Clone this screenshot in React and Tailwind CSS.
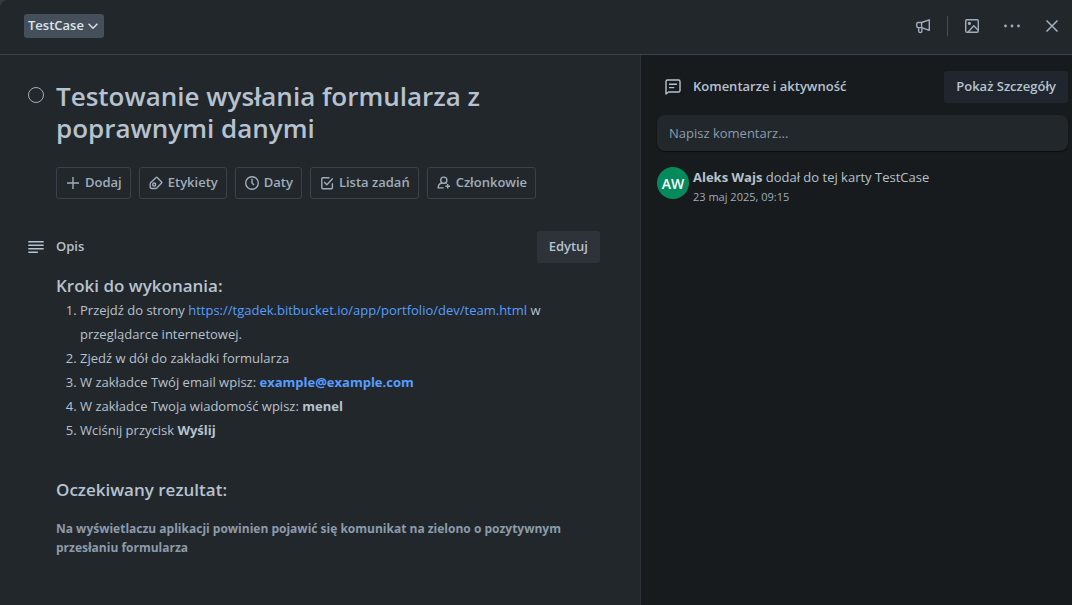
import React from "react";

function Icon({ size = 16, box = 16, className = "", children }) {
  return (
    <svg
      width={size}
      height={size}
      viewBox={`0 0 ${box} ${box}`}
      fill="none"
      stroke="currentColor"
      strokeWidth="1.4"
      strokeLinejoin="round"
      className={`shrink-0 ${className}`}
      aria-hidden="true"
    >
      {children}
    </svg>
  );
}

const MegaphoneIcon = () => (
  <Icon>
    <path d="M14.3 1.8v10.6L6.6 9.6H3.2a1.5 1.5 0 0 1-1.5-1.5V6a1.5 1.5 0 0 1 1.5-1.5h3.4z" />
    <path d="M6.6 4.5v5.1M3.7 9.7v3.2a1.6 1.6 0 0 0 3.2 0V9.7" />
  </Icon>
);

const ImageIcon = () => (
  <Icon>
    <rect x="1.7" y="1.7" width="12.6" height="12.6" rx="1.3" />
    <circle cx="5.4" cy="5.4" r="1.6" fill="currentColor" stroke="none" />
    <path d="m4.2 14 5.6-6.2 4.4 4.4" />
  </Icon>
);

const MoreIcon = () => (
  <Icon size={18} box={18}>
    <g fill="currentColor" stroke="none">
      <circle cx="2.5" cy="9" r="1.4" />
      <circle cx="9" cy="9" r="1.4" />
      <circle cx="15.5" cy="9" r="1.4" />
    </g>
  </Icon>
);

const CloseIcon = () => (
  <Icon>
    <path d="m2.5 2.5 11 11m0-11-11 11" strokeWidth="1.6" />
  </Icon>
);

const PlusIcon = () => (
  <Icon>
    <path d="M8 2v12M2 8h12" />
  </Icon>
);

const LabelIcon = () => (
  <Icon>
    <path d="M9.2 2.4 13.6 6.9a.9.9 0 0 1 0 1.2l-4.8 4.8c-.4.4-.8.6-1.3.6H4.1A1.9 1.9 0 0 1 2.2 11.6V9c0-.5.2-1 .6-1.4l5.4-5.2a.7.7 0 0 1 1 0z" />
    <circle cx="6.2" cy="9.5" r="1.5" />
  </Icon>
);

const ClockIcon = () => (
  <Icon>
    <circle cx="8" cy="8" r="6.3" />
    <path d="M8 3.8V8l2 2" />
  </Icon>
);

const ChecklistIcon = () => (
  <Icon>
    <path d="M10.5 2.8H3.8a1 1 0 0 0-1 1v8.9a1 1 0 0 0 1 1h8.6a1 1 0 0 0 1-1V8.2" />
    <path d="m5.2 7 2.6 2.8 5.9-6.3" />
  </Icon>
);

const MemberIcon = () => (
  <Icon>
    <circle cx="7.8" cy="5.2" r="3.1" />
    <path d="M6 8c-2.6.5-3.8 2.3-3.8 4.9h5.6M9.6 7.6l1.2.9M11.7 9v4.6M9.4 11.3H14" />
  </Icon>
);

const DescriptionIcon = () => (
  <Icon>
    <path d="M.3 2.7h15.4M.3 6.2h15.4M.3 9.7h15.4M.3 13.2h9.6" strokeWidth="1.5" />
  </Icon>
);

const CommentIcon = () => (
  <Icon>
    <path d="M1 15V2.4A1.4 1.4 0 0 1 2.4 1h11.2A1.4 1.4 0 0 1 15 2.4v9.2a1.4 1.4 0 0 1-1.4 1.4H3.5z" />
    <path d="M4 5.3h8M4 8.6h5.3" />
  </Icon>
);

const ACTIONS = [
  { label: "Dodaj", icon: PlusIcon },
  { label: "Etykiety", icon: LabelIcon },
  { label: "Daty", icon: ClockIcon },
  { label: "Lista zadań", icon: ChecklistIcon },
  { label: "Członkowie", icon: MemberIcon },
];

function Header() {
  return (
    <header className="flex items-start justify-between border-b border-[#3a444c] pt-2.5 pr-1 pb-3 pl-6">
      <button
        type="button"
        className="mt-1 flex h-6 items-center gap-0.5 rounded-[3px] bg-[#454f59] px-1 text-[13px] font-semibold text-[#dee4ea]"
      >
        TestCase
        <Icon size={14}>
          <path d="m3 5.5 5 5 5-5" strokeWidth="1.6" />
        </Icon>
      </button>
      <div className="flex items-center text-[#9fadbc]">
        <button type="button" aria-label="Opinia" className="grid size-8 place-items-center">
          <MegaphoneIcon />
        </button>
        <span className="mx-2 h-5 w-px bg-[#454f59]" />
        <button type="button" aria-label="Okładka" className="grid size-8 place-items-center">
          <ImageIcon />
        </button>
        <button type="button" aria-label="Więcej" className="ml-2 grid size-8 place-items-center">
          <MoreIcon />
        </button>
        <button type="button" aria-label="Zamknij" className="ml-2 grid size-8 place-items-center">
          <CloseIcon />
        </button>
      </div>
    </header>
  );
}

function Description() {
  return (
    <section>
      <div className="flex h-8 items-center">
        <DescriptionIcon />
        <h2 className="ml-3 flex-1 text-[13px] font-semibold">Opis</h2>
        <button
          type="button"
          className="h-8 rounded-[3px] bg-[#2d3339] px-3 text-[13px] font-semibold"
        >
          Edytuj
        </button>
      </div>
      <div className="mt-[11px] ml-7">
        <h3 className="text-[17px] leading-6 font-semibold">Kroki do wykonania:</h3>
        <ol className="list-decimal pl-6 text-[13px] leading-6">
          <li>
            Przejdź do strony{" "}
            <a href="https://tgadek.bitbucket.io/app/portfolio/dev/team.html" className="text-[#579dff]">
              https://tgadek.bitbucket.io/app/portfolio/dev/team.html
            </a>{" "}
            w przeglądarce internetowej.
          </li>
          <li>Zjedź w dół do zakładki formularza</li>
          <li>
            W zakładce Twój email wpisz:{" "}
            <a href="mailto:example@example.com" className="font-bold text-[#579dff]">
              example@example.com
            </a>
          </li>
          <li>
            W zakładce Twoja wiadomość wpisz: <strong>menel</strong>
          </li>
          <li>
            Wciśnij przycisk <strong>Wyślij</strong>
          </li>
        </ol>
        <h3 className="mt-9 text-[17px] leading-6 font-semibold">Oczekiwany rezultat:</h3>
        <p className="mt-[17px] text-[12px] leading-[19px] font-bold text-[#8c9bab]">
          Na wyświetlaczu aplikacji powinien pojawić się komunikat na zielono o pozytywnym przesłaniu
          formularza
        </p>
      </div>
    </section>
  );
}

function Activity() {
  return (
    <aside className="w-[432px] shrink-0 border-l border-[#2c3237] bg-[#171b1e] py-4 pr-1 pl-4">
      <div className="flex items-center">
        <span className="ml-2">
          <CommentIcon />
        </span>
        <h2 className="ml-3 flex-1 text-[13px] font-semibold">Komentarze i aktywność</h2>
        <button
          type="button"
          className="h-8 rounded-[3px] bg-[#20262d] px-3 text-[13px] font-semibold"
        >
          Pokaż Szczegóły
        </button>
      </div>
      <input
        type="text"
        aria-label="Napisz komentarz"
        placeholder="Napisz komentarz..."
        className="mt-3 h-9 w-full rounded-lg bg-[#22272b] px-3 text-[13px] font-medium shadow-[0_1px_1px_#0b0e10] placeholder:text-[#8c9bab]"
      />
      <div className="mt-4 flex gap-1">
        <span className="grid size-8 shrink-0 place-items-center rounded-full bg-[#058a5b] text-[14px] font-semibold text-white">
          AW
        </span>
        <div>
          <p className="text-[13px] leading-5">
            <strong>Aleks Wajs</strong> dodał do tej karty TestCase
          </p>
          <p className="text-[11px] leading-5 text-[#9fadbc]">23 maj 2025, 09:15</p>
        </div>
      </div>
    </aside>
  );
}

export default function App() {
  return (
    <div className="min-h-screen bg-[#3a3a3c] font-['Open_Sans','Noto_Sans',sans-serif] text-[#b6c2cf]">
      <div className="flex min-h-screen flex-col rounded-tl-lg bg-[#22272b]">
        <Header />
        <div className="flex flex-1">
          <main className="min-w-0 flex-1 pt-[25px] pr-10 pb-6 pl-7">
            <div className="flex">
              <input
                type="checkbox"
                aria-label="Oznacz jako ukończone"
                className="mt-[7px] size-4 shrink-0 appearance-none rounded-full border border-[#9fadbc]"
              />
              <h1 className="ml-3 text-[26px] leading-8 font-semibold">
                Testowanie wysłania formularza z poprawnymi danymi
              </h1>
            </div>
            <div className="mt-[23px] mb-8 ml-7 flex gap-2">
              {ACTIONS.map(({ label, icon: Glyph }) => (
                <button
                  key={label}
                  type="button"
                  className="flex h-8 items-center gap-1 rounded-[3px] border border-[#3a434b] px-2 text-[13px] font-semibold whitespace-nowrap text-[#9fadbc]"
                >
                  <Glyph />
                  {label}
                </button>
              ))}
            </div>
            <Description />
          </main>
          <Activity />
        </div>
      </div>
    </div>
  );
}
